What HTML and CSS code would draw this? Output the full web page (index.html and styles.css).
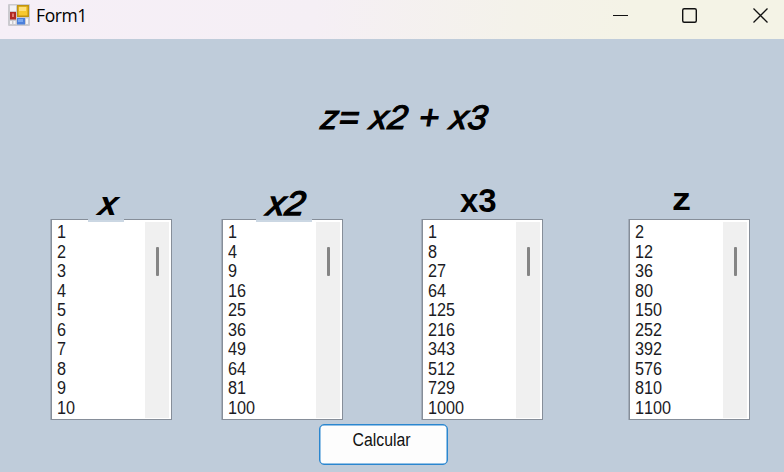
FILE: index.html
```html
<!DOCTYPE html>
<html lang="es">
<head>
<meta charset="utf-8">
<title>Form1</title>
<link rel="stylesheet" href="styles.css">
</head>
<body>
<header class="titlebar">
  <svg class="app-icon" width="22" height="22" viewBox="0 0 22 22">
    <rect width="22" height="22" rx="1" fill="#cbcacf"/>
    <rect x="2" y="1.500" width="6" height="5.500" fill="#f3f2f5"/>
    <rect x="2" y="8" width="6" height="7.500" fill="#b02a22"/>
    <rect x="4" y="9.500" width="2" height="3.500" fill="#df7b70"/>
    <rect x="9" y="1" width="12" height="12" fill="#c1930f"/>
    <rect x="10.500" y="2.500" width="9" height="9" fill="#f8c92f"/>
    <rect x="11" y="3" width="7" height="4" fill="#fde07b"/>
    <rect x="9" y="14" width="8" height="6.500" fill="#4b80db"/>
    <rect x="10" y="15" width="5" height="3" fill="#78a8f2"/>
    <path d="M2 17h2v3H2zM5.500 17h2v3h-2zM18 14.500h2v5.500h-2z" fill="#f6f5f7"/>
  </svg>
  <span class="title">Form1</span>
  <svg class="controls" width="160" height="30" viewBox="0 0 160 30" fill="none" stroke="#111">
    <path d="M0 15.500H15"/>
    <rect x="69.700" y="8.700" width="13.600" height="13.600" rx="1.500" stroke-width="1.400"/>
    <path d="M140.500 8.500l14 14m0-14l-14 14" stroke-width="1.300"/>
  </svg>
</header>
<main class="form">
  <h1 class="formula">z= x2 + x3</h1>
  <div class="columns">
    <section class="col c1"><h2 class="head tilt"><span><b>x</b></span></h2>
      <div class="list"><ul><li>1</li><li>2</li><li>3</li><li>4</li><li>5</li><li>6</li><li>7</li><li>8</li><li>9</li><li>10</li></ul><div class="scroll"><i></i></div></div></section>
    <section class="col c2"><h2 class="head tilt"><span><b>x2</b></span></h2>
      <div class="list"><ul><li>1</li><li>4</li><li>9</li><li>16</li><li>25</li><li>36</li><li>49</li><li>64</li><li>81</li><li>100</li></ul><div class="scroll"><i></i></div></div></section>
    <section class="col c3"><h2 class="head"><span>x3</span></h2>
      <div class="list"><ul><li>1</li><li>8</li><li>27</li><li>64</li><li>125</li><li>216</li><li>343</li><li>512</li><li>729</li><li>1000</li></ul><div class="scroll"><i></i></div></div></section>
    <section class="col c4"><h2 class="head"><span>z</span></h2>
      <div class="list"><ul><li>2</li><li>12</li><li>36</li><li>80</li><li>150</li><li>252</li><li>392</li><li>576</li><li>810</li><li>1100</li></ul><div class="scroll"><i></i></div></div></section>
  </div>
  <button class="calc"><span>Calcular</span></button>
</main>
</body>
</html>
```
FILE: styles.css
```css
* { box-sizing: border-box; margin: 0; padding: 0; }
body {
  width: 784px;
  height: 472px;
  overflow: hidden;
  background: #bfccda;
  color: #000;
  font-family: "Liberation Sans", Arial, sans-serif;
  font-kerning: none;
}
.titlebar {
  display: flex;
  align-items: flex-start;
  height: 39px;
  background: linear-gradient(95deg, #f6eff7 0%, #f5eff5 40%, #f4f2ea 66%, #f4f3e6 80%, #f4f3e6 100%);
}
.app-icon { margin: 4px 0 0 8px; }
.title {
  margin-left: 6px;
  font: 17.5px/31px "Open Sans", sans-serif;
  letter-spacing: -0.4px;
}
.controls { margin-left: auto; margin-right: 11px; }
.form { display: flex; flex-direction: column; height: 433px; }
.formula {
  width: 180px;
  margin: 58px 0 0 320px;
  font-size: 34px;
  font-weight: normal;
  line-height: 40px;
  font-style: italic;
  white-space: nowrap;
  word-spacing: 1px;
  letter-spacing: .5px;
  -webkit-text-stroke: 1.2px #000;
  transform: skewX(-9deg) scaleX(1.01);
  transform-origin: 0 30px;
}
.columns {
  display: grid;
  grid-template-columns: 121px 121px 121px 121px;
  column-gap: 50px;
  margin: 43px 0 0 51px;
}
.c3 { margin-left: 29px; margin-right: -29px; }
.c4 { margin-left: 65px; margin-right: -65px; }
.head {
  display: flex;
  height: 39px;
  font-size: 33px;
  line-height: 42px;
}
.head span { position: relative; z-index: 1; height: 36px; }
.tilt { font-size: 34px; font-style: italic; }
.tilt span {
  height: 42px;
  background: linear-gradient(#bfccda 40px, #cbd7e3 40px);
  line-height: 46px;
}
.tilt b { display: block; transform: skewX(-9deg) scaleX(1.03); transform-origin: 0 35px; }
.c1 .tilt span { width: 36px; margin-left: 37px; padding-left: 9px; }
.c2 .tilt span { width: 56px; margin-left: 34px; padding-left: 10px; }
.c2 .tilt b { font-weight: normal; letter-spacing: .5px; -webkit-text-stroke: 1.4px #000; }
.c3 .head span { margin-left: 38px; }
.c4 .head span {
  margin-left: 43px;
  line-height: 37px;
  transform: scale(1.15, .95);
  transform-origin: 0 29px;
}
.list {
  display: flex;
  height: 201px;
  padding: 2px 2px 1px 5px;
  border: 1px solid #868e99;
  box-shadow: -1px 0 0 #a3adba;
  background: #fff;
}
ul { flex: 1; list-style: none; }
li {
  height: 19.500px;
  font-size: 18px;
  line-height: 21px;
  transform: scaleX(.9);
  transform-origin: left;
  color: #1b1b24;
}
.scroll { width: 24px; background: #f0f0f0; }
.scroll i { display: block; width: 3px; height: 29px; margin: 25px 0 0 10.5px; border-radius: 1px; background: #858585; }
.calc {
  width: 129px;
  height: 41px;
  margin: 4px 0 0 319px;
  padding-bottom: 9px;
  border: 1px solid #2a86cf;
  border-radius: 5px;
  box-shadow: inset 0 0 0 .5px #2a86cf;
  background: #fdfdfd;
  color: #111;
  font: 18px "Liberation Sans", sans-serif;
}
.calc span { display: block; transform: translateX(-2px) scaleX(.88); }
```
